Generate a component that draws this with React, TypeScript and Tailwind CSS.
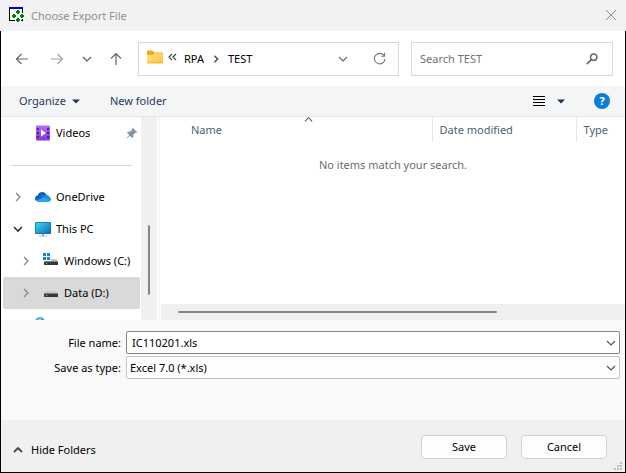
import React from "react";

type IconProps = { className?: string };

const Chevron = ({ className = "", d, size = 10, w = 1.2 }: IconProps & { d: string; size?: number; w?: number }) => (
  <svg width={size} height={size} viewBox="0 0 10 10" fill="none" stroke="currentColor" strokeWidth={w} className={`shrink-0 ${className}`} aria-hidden="true">
    <path d={d} />
  </svg>
);

const DOWN = "M1 3L5 7L9 3";
const UP = "M1 7L5 3L9 7";
const RIGHT = "M3 1L7 5L3 9";

const AppIcon = () => (
  <svg width="16" height="16" viewBox="0 0 16 16" className="shrink-0" shapeRendering="crispEdges" aria-hidden="true">
    <path d="M0 0H14V14H0Z" fill="#000" />
    <path d="M1 2H13V13H1Z" fill="#fff" />
    <path d="M0 0H14V2H0Z" fill="#0000f0" />
    <path d="M7 3H11V6H15V12H12V15H6V12H3V6H7Z" fill="#fff" />
    <g fill="#008000">
      <path d="M8 3h2v1h1v2h-1v1H8V6H7V4h1z" />
      <path d="M4 7h2v1h1v2H6v1H4v-1H3V8h1z" />
      <path d="M12 7h2v1h1v2h-1v1h-2v-1h-1V8h1z" />
      <path d="M8 11h2v1h1v2h-1v1H8v-1H7v-2h1z" />
    </g>
  </svg>
);

const Arrow = ({ d, className = "" }: IconProps & { d: string }) => (
  <svg width="14" height="14" viewBox="0 0 14 14" fill="none" stroke="currentColor" strokeWidth="1.2" className={className} aria-hidden="true">
    <path d={d} />
  </svg>
);

const FolderIcon = () => (
  <svg width="16" height="14" viewBox="0 0 16 14" className="mb-1 shrink-0" aria-hidden="true">
    <defs>
      <linearGradient id="folder" x1="0" y1="0" x2="1" y2="1">
        <stop offset="0" stopColor="#ffe08a" />
        <stop offset="1" stopColor="#fcc63c" />
      </linearGradient>
    </defs>
    <path d="M0 1.5Q0 0.5 1 0.5H5.5L7.5 2.5H15Q16 2.5 16 3.5V8H0Z" fill="#f0ab12" />
    <path d="M0 5H5.5L7.5 3.2H15.3Q16 3.2 16 4V12.4Q16 13.3 15 13.3H1Q0 13.3 0 12.4Z" fill="url(#folder)" />
    <path d="M0.3 12.9H15.7" stroke="#e8b02c" strokeWidth="0.7" />
  </svg>
);

const RefreshIcon = () => (
  <svg width="13" height="13" viewBox="0 0 13 13" fill="none" stroke="#777" strokeWidth="1.1" aria-hidden="true">
    <path d="M11.3 4A5.3 5.3 0 1 0 12 6.8" />
    <path d="M11.6 0.8V4.2H8.2" />
  </svg>
);

const SearchIcon = () => (
  <svg width="12" height="12" viewBox="0 0 12 12" fill="none" stroke="#6b6b6b" aria-hidden="true">
    <circle cx="7.7" cy="4.3" r="3.2" strokeWidth="1.5" />
    <path d="M5.3 6.7L0.8 11.2" strokeWidth="1.8" />
  </svg>
);

const VideosIcon = () => (
  <svg width="16" height="16" viewBox="0 0 16 16" className="shrink-0" aria-hidden="true">
    <defs>
      <linearGradient id="video" x1="0" y1="0" x2="0" y2="1">
        <stop offset="0" stopColor="#b56cf2" />
        <stop offset="1" stopColor="#8038d8" />
      </linearGradient>
    </defs>
    <rect x="1" y="0.5" width="14" height="15" rx="1" fill="url(#video)" />
    <path d="M2 3h2v2H2zM2 7h2v2H2zM2 11h2v2H2zM12 3h2v2h-2zM12 7h2v2h-2zM12 11h2v2h-2z" fill="#4d1d96" />
    <path d="M6 4.5L11 8L6 11.5Z" fill="#fff" />
  </svg>
);

const PinIcon = () => (
  <svg width="12" height="12" viewBox="0 0 12 12" className="shrink-0" aria-hidden="true">
    <path d="M6.8 0.8L11.2 5.2L10.2 6L9.4 5.8L7.4 7.8L7.2 10.4L6.2 11L3.9 8.7L1.2 11.2L0.8 10.8L3.3 8.1L1 5.8L1.7 4.8L4.2 4.6L6.2 2.6L6 1.8Z" fill="#8795a3" />
  </svg>
);

const OneDriveIcon = () => (
  <svg width="16" height="16" viewBox="0 0 16 16" className="shrink-0" aria-hidden="true">
    <path d="M4 12.5Q0 12.5 0 9.3Q0.2 6.8 2.8 6.2Q4 3 7.2 3Q10.3 3 11.6 6L6 11Z" fill="#0f5fbd" />
    <path d="M5.6 6.3Q8.5 5 10.5 6.7Q11.5 6 13 6.5L12 10L8.5 8.8Z" fill="#1478d4" />
    <path d="M8.6 8.8L11.4 6.3Q14 5.6 14.7 8.2Q16.2 9 15.9 11L14 12Z" fill="#1490df" />
    <path d="M1 11.6L8.6 8.3L15.9 11.3Q15.2 13 13.2 13H4Q2 13 1 11.6Z" fill="#28a8ea" />
  </svg>
);

const PcIcon = () => (
  <svg width="16" height="16" viewBox="0 0 16 16" className="shrink-0" aria-hidden="true">
    <defs>
      <linearGradient id="screen" x1="0" y1="0" x2="1" y2="1">
        <stop offset="0" stopColor="#38dce4" />
        <stop offset="1" stopColor="#1168bd" />
      </linearGradient>
    </defs>
    <rect x="0" y="1" width="16" height="12" rx="0.7" fill="#116b9c" />
    <rect x="0.7" y="1.7" width="14.6" height="10.6" fill="url(#screen)" />
    <path d="M7 13H9V15H7Z" fill="#9ba4ab" />
    <path d="M4 14.5H12V15.5H4Z" fill="#aab4bb" />
  </svg>
);

const DriveIcon = ({ system = false }: { system?: boolean }) => (
  <svg width="16" height="16" viewBox="0 0 16 16" className="shrink-0" aria-hidden="true">
    {system && <path d="M0 0h3v3H0zM4 0h3v3H4zM0 4h3v3H0zM4 4h3v3H4z" fill="#1683d8" />}
    <path d={system ? "M8 6H13.5L15 9H1L2.5 8H8Z" : "M2.6 6.5H13.4L15 9H1Z"} fill="#c3c5c7" />
    <rect x="1" y="8.5" width="14" height="3.5" rx="0.5" fill="#383838" />
    <rect x="3" y="9.8" width="1.2" height="1.2" fill="#3ddc52" />
  </svg>
);

const NetworkIcon = () => (
  <svg width="16" height="16" viewBox="0 0 16 16" className="shrink-0" aria-hidden="true">
    <circle cx="5" cy="5" r="5" fill="#3d9fcf" />
    <path d="M1 4Q4 0 7 1L5 5Z" fill="#8cc9e4" />
    <rect x="3" y="7" width="12" height="8" fill="#1c79b8" />
  </svg>
);

type TreeItemProps = {
  label: string;
  icon: React.ReactNode;
  open?: boolean;
  nested?: boolean;
  selected?: boolean;
};

const TreeItem = ({ label, icon, open, nested, selected }: TreeItemProps) => (
  <li className="pr-px pl-0.5">
    <button
      type="button"
      className={`flex h-8 w-full items-center rounded-xs whitespace-nowrap ${nested ? "pl-[18px]" : "pl-2.5"} ${selected ? "bg-[#d9d9d9]" : ""}`}
    >
      <Chevron d={open ? DOWN : RIGHT} w={open ? 1.6 : 1.4} className={open ? "text-[#333]" : "text-[#8a8a8a]"} />
      <span className="ml-3 flex items-center gap-[5px]">
        {icon}
        {label}
      </span>
    </button>
  </li>
);

export default function App() {
  return (
    <main className="flex h-screen min-h-[420px] flex-col bg-white font-['Noto_Sans','Open_Sans',sans-serif] text-[11px] leading-4 text-black">
      <header className="flex h-[31px] shrink-0 items-center bg-[#f2f2f2] pr-2.5 pb-px pl-[9px]">
        <AppIcon />
        <h1 className="ml-1.5 flex-1 pt-px text-[#8f8f8f]">Choose Export File</h1>
        <button type="button" aria-label="Close" className="text-[#8a8a8a]">
          <Chevron d="M0 0L10 10M10 0L0 10" size={10} w={1} />
        </button>
      </header>

      <div className="flex min-h-0 flex-1 flex-col border-r border-b border-l border-black">
        <nav className="flex h-[55px] shrink-0 items-center pr-3 pl-3.5">
          <button type="button" aria-label="Back" className="text-[#666]">
            <Arrow d="M13 7H1.5M6.5 2L1.5 7L6.5 12" />
          </button>
          <button type="button" aria-label="Forward" className="ml-[21px] text-[#a0a0a0]">
            <Arrow d="M1 7H12.5M7.5 2L12.5 7L7.5 12" />
          </button>
          <button type="button" aria-label="Recent locations" className="ml-[18px] text-[#707070]">
            <Chevron d={DOWN} w={1.5} />
          </button>
          <button type="button" aria-label="Up" className="ml-[17px] text-[#666]">
            <Arrow d="M7 13V1.5M2 6.5L7 1.5L12 6.5" />
          </button>
          <div className="ml-[15px] flex h-[34px] flex-1 items-center border border-[#d9d9d9] pr-3 pl-2">
            <FolderIcon />
            <button type="button" aria-label="Parent folders" className="mb-1 ml-[5px] flex text-[#444]">
              <svg width="9" height="8" viewBox="0 0 9 8" fill="none" stroke="currentColor" strokeWidth="1.2" aria-hidden="true">
                <path d="M4 1L1 4L4 7M8 1L5 4L8 7" />
              </svg>
            </button>
            <button type="button" className="ml-[7px]">RPA</button>
            <Chevron d={RIGHT} size={8} w={2} className="mx-2 text-[#555]" />
            <button type="button">TEST</button>
            <button type="button" aria-label="Previous locations" className="ml-auto text-[#777]">
              <Chevron d={DOWN} w={1.3} />
            </button>
            <button type="button" aria-label="Refresh" className="ml-[25px]">
              <RefreshIcon />
            </button>
          </div>
          <div className="ml-3 flex h-[34px] w-[202px] items-center border border-[#d9d9d9] pr-3.5 pl-2">
            <input type="search" aria-label="Search TEST" placeholder="Search TEST" className="min-w-0 flex-1 bg-transparent outline-none placeholder:text-[#707070]" />
            <button type="button" aria-label="Search">
              <SearchIcon />
            </button>
          </div>
        </nav>

        <div className="flex h-[31px] shrink-0 items-center border-b border-[#e4e6e9] bg-[#f4f5f7] pr-[15px] pl-[18px] text-[#1e395b]">
          <button type="button" className="flex items-center gap-1.5">
            Organize
            <svg width="8" height="5" viewBox="0 0 8 5" aria-hidden="true"><path d="M0 0.5H8L4 4.5Z" fill="#1e395b" /></svg>
          </button>
          <button type="button" className="ml-[30px]">New folder</button>
          <button type="button" aria-label="Change view" className="ml-auto">
            <svg width="12" height="12" viewBox="0 0 12 12" aria-hidden="true"><path d="M0 1h12v1H0zM0 4h12v1H0zM0 7h12v1H0zM0 10h12v1H0z" fill="#000" /></svg>
          </button>
          <button type="button" aria-label="More view options" className="ml-3">
            <svg width="8" height="5" viewBox="0 0 8 5" aria-hidden="true"><path d="M0 0.5H8L4 4.5Z" fill="#1e395b" /></svg>
          </button>
          <button type="button" aria-label="Help" className="ml-[29px] flex h-4 w-4 items-center justify-center rounded-full bg-[#0a7fd8] text-[11px] font-bold text-white">
            ?
          </button>
        </div>

        <div className="flex min-h-0 flex-1">
          <aside className="flex w-[159px] shrink-0 border-r border-[#f2f2f2]">
            <ul className="w-[140px] overflow-hidden">
              <li>
                <button type="button" className="flex h-8 w-full items-center gap-[5px] pr-[3px] pl-[34px]">
                  <VideosIcon />
                  Videos
                  <span className="ml-auto"><PinIcon /></span>
                </button>
              </li>
              <li aria-hidden="true" className="flex h-8 items-center pr-[9px] pl-2.5">
                <span className="h-px w-full bg-[#d4d4d4]" />
              </li>
              <TreeItem label="OneDrive" icon={<OneDriveIcon />} />
              <TreeItem label="This PC" icon={<PcIcon />} open />
              <TreeItem label="Windows (C:)" icon={<DriveIcon system />} nested />
              <TreeItem label="Data (D:)" icon={<DriveIcon />} nested selected />
              <li className="flex h-8 items-center pl-[34px]"><NetworkIcon /></li>
            </ul>
            <div className="flex w-4 flex-col items-center bg-[#f0f0f0] pt-[108px]">
              <div className="h-[70px] w-0.5 rounded-full bg-[#868686]" />
            </div>
          </aside>

          <section className="flex min-w-0 flex-1 flex-col pl-px">
            <table className="w-full table-fixed text-left">
              <colgroup>
                <col />
                <col className="w-36" />
                <col className="w-[49px]" />
              </colgroup>
              <thead className="text-[#4c607a]">
                <tr className="h-[25px]">
                  <th className="relative pl-[30px] font-normal">
                    Name
                    <Chevron d={UP} size={9} className="absolute -top-0.5 left-[143px] text-[#555]" />
                  </th>
                  <th className="border-l border-[#e5e5e5] pl-[7px] font-normal">Date modified</th>
                  <th className="border-l border-[#e5e5e5] pl-[7px] font-normal">Type</th>
                </tr>
              </thead>
              <tbody>
                <tr>
                  <td colSpan={3} className="pt-[15px] text-center text-[#6d6d6d]">No items match your search.</td>
                </tr>
              </tbody>
            </table>
            <div className="mt-auto flex h-4 items-center bg-[#f0f0f0] pl-[17px]">
              <div className="h-0.5 w-[319px] rounded-full bg-[#868686]" />
            </div>
          </section>
        </div>

        <form id="export" className="flex h-[100px] shrink-0 flex-col gap-0.5 bg-[#f9f9f9] pt-[11px] pr-[5px]" onSubmit={(e) => e.preventDefault()}>
          <div className="flex items-center">
            <label htmlFor="name" className="w-[125px] pr-[5px] text-right">File name:</label>
            <div className="flex h-[23px] flex-1 items-center rounded-xs border border-[#868686] bg-white pr-[3px] pl-[5px]">
              <input id="name" type="text" defaultValue="IC110201.xls" className="min-w-0 flex-1 outline-none" />
              <button type="button" aria-label="Previous file names" className="text-[#555]"><Chevron d={DOWN} /></button>
            </div>
          </div>
          <div className="flex items-center">
            <label htmlFor="type" className="w-[125px] pr-[5px] text-right">Save as type:</label>
            <div className="relative flex flex-1">
              <select id="type" className="h-[23px] w-full appearance-none rounded-xs border border-[#c4c4c4] bg-[#fdfdfd] pl-[3px] outline-none">
                <option>Excel 7.0 (*.xls)</option>
              </select>
              <Chevron d={DOWN} className="pointer-events-none absolute top-[7px] right-1 text-[#555]" />
            </div>
          </div>
        </form>

        <footer className="relative flex h-[52px] shrink-0 items-center bg-[#f0f0f0] pt-0.5 pr-[18px] pl-3">
          <button type="button" className="mt-1.5 flex items-center gap-2">
            <Chevron d={UP} w={1.8} className="text-[#444]" />
            Hide Folders
          </button>
          <button type="submit" form="export" className="ml-auto h-6 w-[86px] rounded-sm border border-[#d0d0d0] bg-[#fdfdfd]">Save</button>
          <button type="button" className="ml-3.5 h-6 w-[86px] rounded-sm border border-[#d0d0d0] bg-[#fdfdfd]">Cancel</button>
          <svg width="8" height="8" viewBox="0 0 8 8" className="absolute right-[3px] bottom-0.5" aria-hidden="true">
            <path d="M6 0h2v2H6zM3 3h2v2H3zM6 3h2v2H6zM0 6h2v2H0zM3 6h2v2H3zM6 6h2v2H6z" fill="#bdbdbd" />
          </svg>
        </footer>
      </div>
    </main>
  );
}
